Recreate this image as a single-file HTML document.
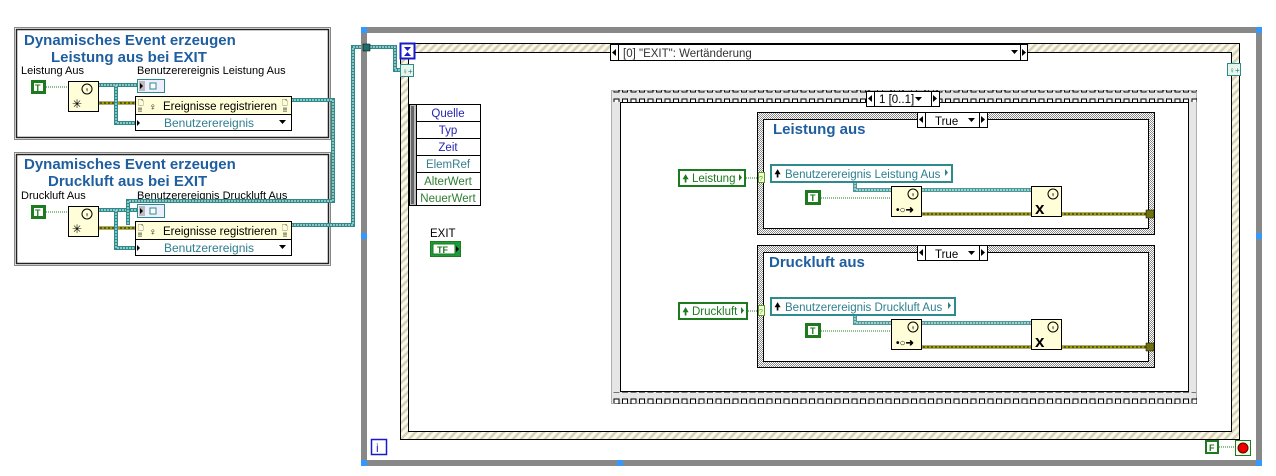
<!DOCTYPE html>
<html><head><meta charset="utf-8"><style>
html,body{margin:0;padding:0;background:#fff;width:1276px;height:476px;overflow:hidden}
svg{display:block}
text{font-family:"Liberation Sans",sans-serif}
</style></head><body>
<svg width="1276" height="476" viewBox="0 0 1276 476" xmlns="http://www.w3.org/2000/svg">
<defs>
<pattern id="stripe" width="8" height="8" patternUnits="userSpaceOnUse">
<rect width="8" height="8" fill="#fbf9e6"/>
<path d="M-2,10 L10,-2 M-2,2 L2,-2 M6,10 L10,6" stroke="#d3d1bb" stroke-width="2.5"/>
</pattern>
<pattern id="filmh" width="8.5" height="12" patternUnits="userSpaceOnUse">
<rect width="8.5" height="12" fill="#e6e6e6"/>
<rect x="2" y="3" width="5" height="5" fill="#fff" stroke="#000" stroke-width="1"/>
</pattern>
<pattern id="check" width="2" height="2" patternUnits="userSpaceOnUse">
<rect width="2" height="2" fill="#fff"/><rect width="1" height="1" fill="#8a8a8a"/><rect x="1" y="1" width="1" height="1" fill="#8a8a8a"/>
</pattern>
</defs>

<!-- LEFT PANELS -->
<g>
<rect x="14.5" y="27.5" width="316" height="112" fill="#fff" stroke="#888" stroke-width="1"/>
<rect x="16.5" y="29.5" width="312" height="108" fill="#fff" stroke="#222" stroke-width="1.5"/>
<text x="24" y="45" font-size="15" font-weight="bold" fill="#1f5fa0">Dynamisches Event erzeugen</text>
<text x="51" y="62" font-size="15" font-weight="bold" fill="#1f5fa0">Leistung aus bei EXIT</text>
<text x="21" y="74" font-size="11" fill="#000">Leistung Aus</text>
<text x="137" y="74" font-size="11" fill="#000">Benutzerereignis Leistung Aus</text>

<rect x="14.5" y="152.5" width="316" height="113" fill="#fff" stroke="#888" stroke-width="1"/>
<rect x="16.5" y="154.5" width="312" height="109" fill="#fff" stroke="#222" stroke-width="1.5"/>
<text x="24" y="169" font-size="15" font-weight="bold" fill="#1f5fa0">Dynamisches Event erzeugen</text>
<text x="48" y="186" font-size="15" font-weight="bold" fill="#1f5fa0">Druckluft aus bei EXIT</text>
<text x="21" y="199" font-size="11" fill="#000">Druckluft Aus</text>
<text x="137" y="199" font-size="11" fill="#000">Benutzerereignis Druckluft Aus</text>
</g>

<!-- left wires -->
<g fill="none">
<path d="M46,87 H68 M46,212 H68" stroke="#1e7a1e" stroke-width="1" stroke-dasharray="1,1"/>
<path d="M98,103 H135 M98,228 H135" stroke="#5a5a00" stroke-width="3"/>
<path d="M98,103 H135 M98,228 H135" stroke="#e8d800" stroke-width="1" stroke-dasharray="2,2"/>
<path d="M98,85 H137 M116,85 V123 H137 M98,210 H137 M116,210 V248 H137" stroke="#2d8b8b" stroke-width="4"/>
<path d="M98,85 H137 M116,85 V123 H137 M98,210 H137 M116,210 V248 H137" stroke="#cfe6e6" stroke-width="1.2" stroke-dasharray="2,1"/>
<path d="M291,100 H333 V201 H128 V225 M291,225 H353 V47 H367 M370,47 H395 V70 H402" stroke="#2d8b8b" stroke-width="4"/>
<path d="M291,100 H333 V201 H128 V225 M291,225 H353 V47 H367 M370,47 H395 V70 H402" stroke="#cfe6e6" stroke-width="1.2" stroke-dasharray="2,1"/>
</g>

<g id="lp">
<rect x="31" y="80" width="15" height="14" fill="#1e7a1e"/><rect x="34" y="83" width="9" height="8" fill="#fff"/><text x="35" y="91" font-size="9" font-weight="bold" fill="#1e7a1e">T</text>
<rect x="68.5" y="81.5" width="30" height="30" fill="#fffed8" stroke="#000"/>
<circle cx="87" cy="89" r="5" fill="none" stroke="#000"/><text x="84.5" y="92" font-size="7">♀</text>
<text x="72" y="108" font-size="12">✳</text>
<rect x="137.5" y="79.5" width="27" height="13" fill="#eef" stroke="#2d8b8b"/><rect x="139" y="81" width="6" height="10" fill="#bbb"/><path d="M140,83 l3,3 -3,3z" fill="#000"/><rect x="150" y="83" width="6" height="6" fill="#fff" stroke="#2d8b8b"/>
<rect x="135.5" y="96.5" width="156" height="34" fill="#fff" stroke="#000"/>
<rect x="136" y="97" width="155" height="17" fill="#fffed8"/><line x1="135" y1="114.5" x2="291" y2="114.5" stroke="#000"/>
<text x="138" y="105" font-size="7">🗋</text><text x="138" y="112" font-size="6" font-weight="bold">!!</text>
<text x="149" y="110" font-size="10">♀</text>
<text x="163" y="110" font-size="11.5" textLength="114">Ereignisse registrieren</text>
<text x="282" y="105" font-size="7">🗋</text><text x="283" y="112" font-size="6" font-weight="bold">!!</text>
<path d="M137,120 l3,3 -3,3z" fill="#000"/>
<text x="164" y="127" font-size="12" fill="#2d7f8f">Benutzerereignis</text>
<path d="M279,120 h7 l-3.5,4z" fill="#000"/>
</g>
<use href="#lp" transform="translate(0,125)"/>

<!-- WHILE LOOP -->
<rect x="364" y="30" width="895" height="433" fill="none" stroke="#888" stroke-width="6"/>
<rect x="361" y="27" width="6" height="6" fill="#3399ff"/><rect x="1256" y="27" width="6" height="6" fill="#3399ff"/>
<rect x="361" y="460" width="6" height="6" fill="#3399ff"/><rect x="1256" y="460" width="6" height="6" fill="#3399ff"/>
<rect x="361" y="233" width="6" height="6" fill="#3399ff"/><rect x="1256" y="233" width="6" height="6" fill="#3399ff"/>
<rect x="617" y="460" width="6" height="6" fill="#3399ff"/>
<rect x="363" y="44" width="7" height="7" fill="#1f6f6f" stroke="#000" stroke-width="0.5"/>
<rect x="371.5" y="439.5" width="15" height="15" fill="#fff" stroke="#1a1acc" stroke-width="1.5"/>
<text x="376" y="452" font-size="12" fill="#1a1acc">i</text>
<rect x="1205" y="440" width="14" height="14" fill="#1e7a1e"/><rect x="1207" y="442" width="10" height="10" fill="#fff"/><text x="1209" y="451" font-size="9" font-weight="bold" fill="#1e7a1e">F</text>
<path d="M1219,447 H1235" stroke="#1e7a1e" stroke-dasharray="1,1"/>
<rect x="1235.5" y="440.5" width="15" height="15" fill="#efe" stroke="#1e7a1e"/><circle cx="1243" cy="448" r="5" fill="#e00" stroke="#600"/>

<!-- EVENT STRUCTURE -->
<rect x="400" y="43" width="840" height="397" fill="url(#stripe)"/>
<rect x="408.5" y="52.5" width="823" height="379" fill="#fff" stroke="#000"/>
<rect x="400.5" y="43.5" width="839" height="396" fill="none" stroke="#000"/>
<rect x="400.5" y="43.5" width="14" height="15" fill="#fff" stroke="#1a1acc" stroke-width="2"/>
<path d="M404,47 h7 l-3.5,4z M404,56 h7 l-3.5,-4z" fill="#1a1acc"/>
<rect x="400.5" y="64.5" width="13" height="12" fill="#e8f5ec" stroke="#2d8b8b"/><text x="402" y="74" font-size="8" fill="#2d7f6f">♀+</text>
<rect x="1227.5" y="63.5" width="13" height="12" fill="#e8f5ec" stroke="#2d8b8b"/><text x="1229" y="73" font-size="8" fill="#2d7f6f">♀+</text>
<rect x="610.5" y="44.5" width="417" height="16" fill="#fff" stroke="#000"/>
<line x1="618.5" y1="44" x2="618.5" y2="61" stroke="#000"/><path d="M616,49 l-4,3.5 4,3.5z" fill="#000"/>
<line x1="1020.5" y1="44" x2="1020.5" y2="61" stroke="#000"/><path d="M1022,49 l4,3.5 -4,3.5z" fill="#000"/>
<path d="M1011,50 h7 l-3.5,4z" fill="#000"/>
<text x="623" y="57" font-size="11.5" fill="#333">[0] "EXIT": Wertänderung</text>

<rect x="409.5" y="104.5" width="7" height="101" fill="#bbb" stroke="#000"/><rect x="411" y="106" width="3" height="98" fill="#666"/>
<g font-size="11.5" text-anchor="middle">
<rect x="416.5" y="104.5" width="64" height="17" fill="#fff" stroke="#000"/><text x="448" y="117" fill="#2525b0">Quelle</text>
<rect x="416.5" y="121.5" width="64" height="17" fill="#fff" stroke="#000"/><text x="448" y="134" fill="#2525b0">Typ</text>
<rect x="416.5" y="138.5" width="64" height="17" fill="#fff" stroke="#000"/><text x="448" y="151" fill="#2525b0">Zeit</text>
<rect x="416.5" y="155.5" width="64" height="17" fill="#fff" stroke="#000"/><text x="448" y="168" fill="#337f8f">ElemRef</text>
<rect x="416.5" y="172.5" width="64" height="17" fill="#fff" stroke="#000"/><text x="448" y="185" fill="#2e7d32">AlterWert</text>
<rect x="416.5" y="189.5" width="64" height="16" fill="#fff" stroke="#000"/><text x="448" y="202" fill="#2e7d32">NeuerWert</text>
</g>
<text x="430" y="237" font-size="11.5" fill="#000">EXIT</text>
<rect x="430.5" y="241.5" width="30" height="15" fill="#1e9a3e" stroke="#1e7a1e"/><rect x="433" y="244" width="22" height="10" fill="#fff" stroke="#1e7a1e"/><text x="437" y="253" font-size="9" font-weight="bold" fill="#1e7a1e">TF</text><path d="M456,246 l3,3 -3,3z" fill="#000"/>

<!-- SEQUENCE -->
<rect x="611" y="90" width="586" height="314" fill="#e6e6e6"/>
<rect x="611" y="90" width="586" height="12" fill="url(#filmh)"/>
<rect x="611" y="392" width="586" height="12" fill="url(#filmh)"/>
<rect x="620.5" y="102.5" width="568" height="289" fill="#fff" stroke="#000"/>
<rect x="611.5" y="90.5" width="585" height="313" fill="none" stroke="#777" stroke-dasharray="1,1"/>
<rect x="866.5" y="91.5" width="73" height="15" fill="#fff" stroke="#000"/>
<line x1="874.5" y1="91" x2="874.5" y2="107" stroke="#000"/><path d="M872,95 l-4,3.5 4,3.5z" fill="#000"/>
<line x1="931.5" y1="91" x2="931.5" y2="107" stroke="#000"/><path d="M933,95 l4,3.5 -4,3.5z" fill="#000"/>
<path d="M915,97 h7 l-3.5,4z" fill="#000"/>
<text x="879" y="103" font-size="11.5">1 [0..1]</text>

<g id="c1">
<rect x="757" y="112" width="398" height="123" fill="url(#check)"/>
<rect x="757.5" y="112.5" width="397" height="122" fill="none" stroke="#000"/>
<rect x="763.5" y="119.5" width="385" height="109" fill="#fff" stroke="#000"/>
<rect x="917.5" y="112.5" width="70" height="15" fill="#fff" stroke="#000"/>
<line x1="925.5" y1="112" x2="925.5" y2="128" stroke="#000"/><path d="M923,116 l-4,3.5 4,3.5z" fill="#000"/>
<line x1="979.5" y1="112" x2="979.5" y2="128" stroke="#000"/><path d="M981,116 l4,3.5 -4,3.5z" fill="#000"/>
<path d="M968,118 h7 l-3.5,4z" fill="#000"/>
<text x="935" y="125" font-size="11.5">True</text>
</g>
<use href="#c1" transform="translate(0,133)"/>
<text x="773" y="134" font-size="15" font-weight="bold" fill="#1f5fa0">Leistung aus</text>
<text x="769" y="267" font-size="15" font-weight="bold" fill="#1f5fa0">Druckluft aus</text>

<g id="inner1">
<path d="M746,178 H758" stroke="#1e7a1e" stroke-dasharray="1,1"/>
<rect x="758.5" y="172.5" width="6" height="10" fill="#efffd0" stroke="#5a9a2a"/><text x="759" y="181" font-size="7" fill="#5a9a2a">?</text>
<path d="M821,198 H891" stroke="#1e7a1e" stroke-dasharray="1,1"/>
<path d="M855,182 V190 H1031" stroke="#4a9a9a" stroke-width="4" fill="none"/>
<path d="M855,182 V190 H1031" stroke="#d5ecec" stroke-width="1.2" stroke-dasharray="2,1" fill="none"/>
<path d="M921,214 H1031 M1062,214 H1148" stroke="#5a5a00" stroke-width="3"/>
<path d="M921,214 H1031 M1062,214 H1148" stroke="#e8d800" stroke-width="1" stroke-dasharray="2,2"/>
<rect x="1146" y="210" width="8" height="8" fill="#707010" stroke="#000" stroke-width="0.5"/>
<rect x="805" y="190" width="16" height="15" fill="#1e7a1e"/><rect x="808" y="193" width="10" height="9" fill="#fff"/><text x="810" y="201" font-size="9" font-weight="bold" fill="#1e7a1e">T</text>
<rect x="891.5" y="186.5" width="30" height="30" fill="#fffed8" stroke="#000"/>
<circle cx="913" cy="194" r="5" fill="none" stroke="#000"/><text x="910.5" y="197" font-size="7">♀</text>
<text x="896" y="213" font-size="10" font-weight="bold">•○➜</text>
<rect x="1031.5" y="186.5" width="30" height="30" fill="#fffed8" stroke="#000"/>
<circle cx="1053" cy="194" r="5" fill="none" stroke="#000"/><text x="1050.5" y="197" font-size="7">♀</text>
<text x="1035" y="214" font-size="17" font-weight="bold">x</text>
</g>
<use href="#inner1" transform="translate(0,133)"/>

<rect x="679" y="170" width="66" height="16" fill="#fff" stroke="#1e7a1e" stroke-width="2"/>
<text x="682" y="182" font-size="11" fill="#1e7a1e">🠝</text><text x="692" y="182" font-size="11.5" fill="#1e7a1e">Leistung</text><path d="M739,174 l3,3.5 -3,3.5z" fill="#1e7a1e"/>
<rect x="679" y="303" width="68" height="16" fill="#fff" stroke="#1e7a1e" stroke-width="2"/>
<text x="682" y="315" font-size="11" fill="#1e7a1e">🠝</text><text x="692" y="315" font-size="11.5" fill="#1e7a1e">Druckluft</text><path d="M741,307 l3,3.5 -3,3.5z" fill="#1e7a1e"/>
<rect x="771" y="165" width="181" height="17" fill="#fff" stroke="#2d8b8b" stroke-width="2"/>
<text x="774" y="177" font-size="11" fill="#000">🠝</text><text x="785" y="178" font-size="11.5" fill="#2d7f8f">Benutzerereignis Leistung Aus</text><path d="M945,169 l3,3.5 -3,3.5z" fill="#2d7f8f"/>
<rect x="771" y="298" width="184" height="17" fill="#fff" stroke="#2d8b8b" stroke-width="2"/>
<text x="774" y="310" font-size="11" fill="#000">🠝</text><text x="785" y="311" font-size="11.5" fill="#2d7f8f">Benutzerereignis Druckluft Aus</text><path d="M948,302 l3,3.5 -3,3.5z" fill="#2d7f8f"/>
</svg>
</body></html>
